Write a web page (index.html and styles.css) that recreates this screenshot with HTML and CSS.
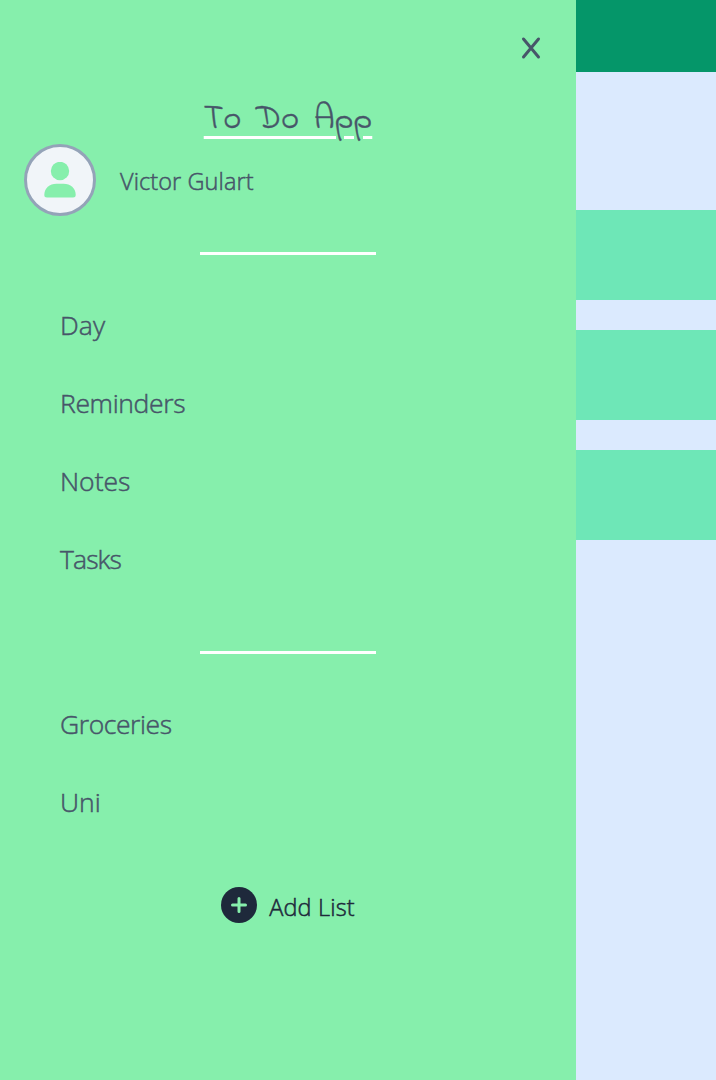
FILE: index.html
```
<!DOCTYPE html>
<html lang="en">
<head>
<meta charset="utf-8">
<title>To Do App</title>
<link rel="stylesheet" href="styles.css">
</head>
<body>
<div class="app">
  <aside class="sidebar">
    <div class="close-row">
      <button class="close" aria-label="Close menu">
        <svg width="20" height="24" viewBox="0 0 20 24"><path d="M2.500 3 17.500 21M17.500 3 2.500 21"/></svg>
      </button>
    </div>
    <h1 class="title">To Do App</h1>
    <div class="profile">
      <div class="avatar">
        <svg width="32" height="36" viewBox="0 0 32 36"><circle cx="16" cy="9" r="9.2"/><path d="M3 35.5Q.3 35.5.3 33C.3 26 5.5 21.7 12.5 21.7h7C26.500 21.700 31.700 26 31.700 33Q31.700 35.500 29 35.500Z"/></svg>
      </div>
      <span class="name">Victor Gulart</span>
    </div>
    <hr class="divider">
    <nav class="menu">
      <a class="item day">Day</a>
      <a class="item reminders">Reminders</a>
      <a class="item notes">Notes</a>
      <a class="item tasks">Tasks</a>
    </nav>
    <hr class="divider">
    <nav class="menu">
      <a class="item groceries">Groceries</a>
      <a class="item uni">Uni</a>
    </nav>
    <button class="add">
      <svg width="36" height="36" viewBox="0 0 36 36"><circle cx="18" cy="18" r="18"/><path d="M18 11.500v13M11.500 18h13"/></svg>
      <span class="add-label">Add List</span>
    </button>
  </aside>
  <main class="content">
    <header class="topbar"></header>
    <section class="cards">
      <div class="card"></div>
      <div class="card"></div>
      <div class="card"></div>
    </section>
  </main>
</div>
</body>
</html>
```
FILE: styles.css
```
* { box-sizing: border-box; }
body {
  margin: 0;
  font-family: "Segoe UI", "Open Sans", sans-serif;
  font-weight: 300;
  color: #475569;
}
button { border: 0; padding: 0; background: none; font: inherit; }
svg { display: block; }
.app {
  display: grid;
  grid-template-columns: 576px 1fr;
  height: 1080px;
  overflow: hidden;
}
.sidebar {
  display: flex;
  flex-direction: column;
  background: #86efac;
}
.close-row {
  display: flex;
  justify-content: flex-end;
  height: 96px;
  padding: 36px 35px 0 0;
}
.close { height: 24px; }
.close path { fill: none; stroke: #475569; stroke-width: 3; stroke-linecap: round; }
.title {
  align-self: center;
  height: 48px;
  margin: 0;
  font: 400 34px/48px "Indie Flower", "Lato", cursive;
  font-kerning: none;
  letter-spacing: 0.200px;
  word-spacing: 6px;
  white-space: nowrap;
  -webkit-text-stroke: 0.400px currentColor;
  text-decoration: underline #fff 3px;
  text-underline-offset: 8px;
}
.profile {
  display: flex;
  align-items: center;
  gap: 24px;
  height: 72px;
  padding-left: 24px;
}
.avatar {
  display: grid;
  justify-content: center;
  width: 72px;
  height: 72px;
  padding-top: 15px;
  border: 3px solid #94a3b8;
  border-radius: 50%;
  background: #f1f5f9;
}
.avatar svg { fill: #86efac; }
.name, .item, .add-label { -webkit-text-stroke: 0.500px currentColor; }
.name { font-size: 23.500px; padding-top: 2px; letter-spacing: 0.080px; }
.divider {
  width: 176px;
  height: 3px;
  margin: 36px auto 32px;
  border: 0;
  background: #fff;
}
.menu { display: flex; flex-direction: column; }
.menu + .divider { margin-top: 52px; }
.item {
  height: 78px;
  padding-left: 60px;
  font-size: 26.500px;
  line-height: 76px;
  letter-spacing: -0.350px;
}
.day { letter-spacing: 0.100px; }
.notes { letter-spacing: 0; }
.tasks { letter-spacing: -0.900px; }
.groceries { letter-spacing: -0.420px; }
.uni { letter-spacing: 0; }
.add {
  display: flex;
  align-items: center;
  align-self: center;
  gap: 12px;
  height: 36px;
  margin-top: 45px;
  color: #1e293b;
}
.add circle { fill: #1e293b; }
.add path { fill: none; stroke: #86efac; stroke-width: 3; stroke-linecap: round; }
.add-label { font-size: 23.500px; padding-top: 4px; letter-spacing: 0.150px; }
.content { background: #dbeafe; }
.topbar { height: 72px; background: #059669; }
.cards { display: grid; gap: 30px; padding-top: 138px; }
.card { height: 90px; background: #6ee7b7; }
```
